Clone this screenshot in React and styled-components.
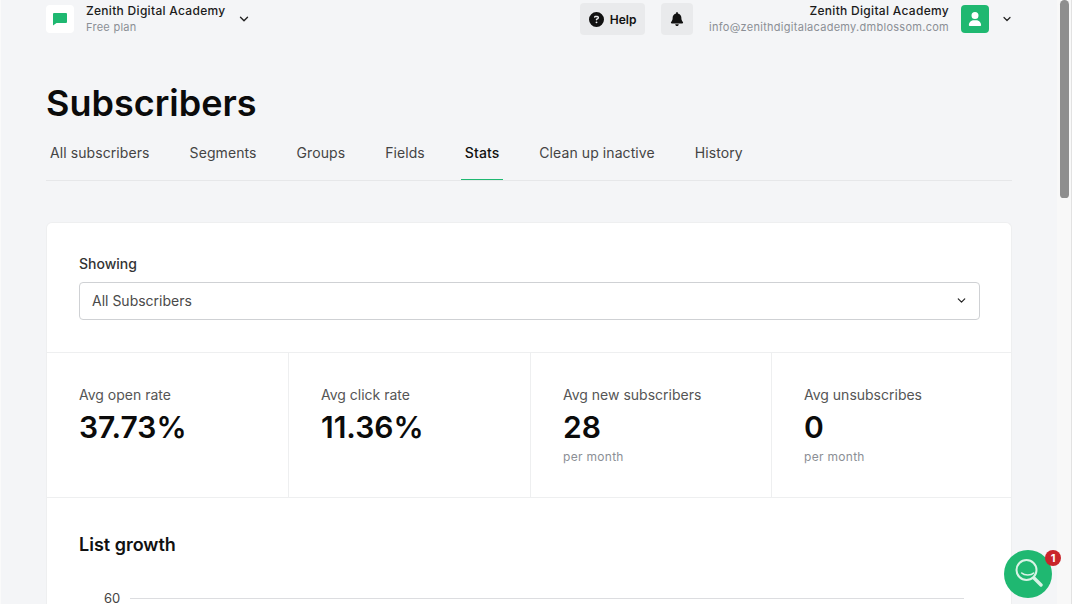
import React from 'react'
import styled, { createGlobalStyle } from 'styled-components'
import { ChevronDown } from 'lucide-react'
import { FaBell, FaCircleQuestion, FaUser } from 'react-icons/fa6'

const Global = createGlobalStyle`
  html, body { margin: 0; height: 100%; overflow: hidden; }
  body { font-family: Inter, "Liberation Sans", sans-serif; background: #f4f5f7; color: #111; }
`

const Shell = styled.div`
  display: flex;
  width: 1073px;
  height: 604px;
  overflow: hidden;
  position: relative;
`
const Page = styled.div`
  flex: 1;
  min-width: 0;
  padding: 0 45px 0 46px;
  box-shadow: inset 1px 0 0 #fafafa;
  box-sizing: border-box;
`
const Scrollbar = styled.div`
  width: 16px;
  background: #f8f8f8;
  box-sizing: border-box;
  padding-left: 3px;
  box-shadow: inset -1px 0 0 #fff, inset -2px 0 0 #e2e2e2;
`
const Thumb = styled.div`
  width: 9px;
  height: 198px;
  border-radius: 5px 5px 4px 4px;
  background: #8e8e8e;
`
const TopBar = styled.header`
  display: flex;
  justify-content: space-between;
  align-items: center;
  height: 38px;
  margin-right: -1px;
`
const Group = styled.div`
  display: flex;
  align-items: center;
`
const LogoBox = styled.div`
  width: 28px;
  height: 28px;
  border-radius: 4px;
  background: #fff;
  display: flex;
  align-items: center;
  justify-content: center;
`
const Org = styled.div`
  margin-left: 12px;
`
const Name = styled.div`
  font-size: 12px;
  line-height: 16px;
  font-weight: 500;
  letter-spacing: 0.3px;
  color: #1b1b1b;
  text-align: ${p => (p.$right ? 'right' : 'left')};
`
const Sub = styled.div`
  font-size: 11px;
  line-height: 16px;
  letter-spacing: 0.275px;
  color: #8b8f95;
  text-align: ${p => (p.$right ? 'right' : 'left')};
`
const Chevron = styled(ChevronDown)`
  color: #222;
  margin-left: ${p => p.$gap}px;
`
const ToolButton = styled.button`
  height: 32px;
  width: ${p => p.$w}px;
  margin-right: ${p => p.$mr}px;
  border: 0;
  border-radius: 4px;
  background: #e9eaec;
  color: #111;
  display: flex;
  align-items: center;
  justify-content: center;
  gap: 6px;
  padding: 0;
  font: 600 12px Inter, sans-serif;
`
const Avatar = styled.div`
  width: 28px;
  height: 28px;
  margin-left: 12px;
  border-radius: 4px;
  background: #1fb871;
  color: #fff;
  display: flex;
  align-items: center;
  justify-content: center;
`
const Title = styled.h1`
  margin: 43px 0 0;
  font-size: 36px;
  line-height: 44px;
  font-weight: 600;
  color: #0b0b0b;
`
const Tabs = styled.nav`
  display: flex;
  gap: 32px;
  margin-top: 11px;
  height: 44px;
  border-bottom: 1px solid #e6e7e9;
`
const Tab = styled.a`
  padding: 0 4px;
  height: 44px;
  box-sizing: border-box;
  line-height: 34px;
  font-size: 14px;
  letter-spacing: 0.085px;
  font-weight: ${p => (p.$active ? 500 : 400)};
  color: ${p => (p.$active ? '#111' : '#444')};
  border-bottom: 1px solid ${p => (p.$active ? '#1fb871' : 'transparent')};
`
const Card = styled.section`
  margin-top: 41px;
  background: #fff;
  border-radius: 6px 6px 0 0;
  border: 1px solid #eeeff0;
  border-bottom: 0;
  height: 400px;
`
const Filter = styled.div`
  padding: 31px 31px 32px 32px;
`
const FieldLabel = styled.div`
  font-size: 14px;
  line-height: 20px;
  font-weight: 500;
  color: #333;
  margin-bottom: 8px;
`
const Select = styled.div`
  height: 38px;
  box-sizing: border-box;
  border: 1px solid #cfd1d4;
  border-radius: 4px;
  padding: 0 11px 2px 12px;
  display: flex;
  align-items: center;
  justify-content: space-between;
  font-size: 14px;
  color: #4a4a4a;
`
const Stats = styled.div`
  display: grid;
  grid-template-columns: 241px 242px 241px 1fr;
  height: 144px;
  border-top: 1px solid #eeeff0;
  border-bottom: 1px solid #eeeff0;
`
const Stat = styled.div`
  padding: 32px 32px 0;
  border-left: ${p => (p.$first ? '0' : '1px solid #eeeff0')};
`
const StatLabel = styled.div`
  font-size: 14px;
  line-height: 20px;
  color: #555;
`
const StatValue = styled.div`
  margin-top: 2px;
  font-size: 30px;
  line-height: 40px;
  font-weight: 600;
  color: #0b0b0b;
`
const StatNote = styled.div`
  font-size: 12px;
  line-height: 18px;
  margin-top: 1px;
  letter-spacing: 0.3px;
  color: #8b8f95;
`
const Growth = styled.div`
  padding: 35px 32px 0;
`
const GrowthTitle = styled.h2`
  margin: 0;
  font-size: 18px;
  line-height: 24px;
  font-weight: 600;
  color: #111;
`
const AxisRow = styled.div`
  display: flex;
  align-items: center;
  gap: 10px;
  margin-top: 33px;
  padding-left: 25px;
  font-size: 13px;
  line-height: 16px;
  color: #444;
`
const GridLine = styled.div`
  flex: 1;
  height: 1px;
  margin-right: 15px;
  background: #dcdde0;
`
const ChatButton = styled.div`
  position: absolute;
  left: 1004px;
  top: 550px;
  width: 48px;
  height: 48px;
  border-radius: 50%;
  background: #1fb871;
  display: flex;
  align-items: center;
  justify-content: center;
`
const Badge = styled.div`
  position: absolute;
  top: 0;
  right: -9px;
  width: 16px;
  height: 16px;
  border-radius: 50%;
  background: #c9252b;
  color: #fff;
  font-size: 11px;
  font-weight: 700;
  line-height: 16px;
  text-align: center;
`

const tabs = ['All subscribers', 'Segments', 'Groups', 'Fields', 'Stats', 'Clean up inactive', 'History']
const stats = [
  { label: 'Avg open rate', value: '37.73%' },
  { label: 'Avg click rate', value: '11.36%' },
  { label: 'Avg new subscribers', value: '28', note: 'per month' },
  { label: 'Avg unsubscribes', value: '0', note: 'per month' },
]

const App = () => {
  return (
    <Shell>
      <Global />
      <Page>
        <TopBar>
          <Group>
            <LogoBox>
              <svg width="16" height="14" viewBox="0 0 16 14" fill="#1fb871">
                <path d="M2 1h12a1 1 0 0 1 1 1v8a1 1 0 0 1-1 1H4.5L1 13.5V2a1 1 0 0 1 1-1z" />
              </svg>
            </LogoBox>
            <Org>
              <Name>Zenith Digital Academy</Name>
              <Sub>Free plan</Sub>
            </Org>
            <Chevron size={14} strokeWidth={2.4} $gap={11} />
          </Group>
          <Group>
            <ToolButton $w={65} $mr={16}><FaCircleQuestion size={15} />Help</ToolButton>
            <ToolButton $w={32} $mr={16}><FaBell size={14} /></ToolButton>
            <div>
              <Name $right>Zenith Digital Academy</Name>
              <Sub $right>info@zenithdigitalacademy.dmblossom.com</Sub>
            </div>
            <Avatar><FaUser size={14} /></Avatar>
            <Chevron size={12} strokeWidth={2.4} $gap={12} />
          </Group>
        </TopBar>
        <Title>Subscribers</Title>
        <Tabs>
          {tabs.map(t => <Tab key={t} $active={t === 'Stats'}>{t}</Tab>)}
        </Tabs>
        <Card>
          <Filter>
            <FieldLabel>Showing</FieldLabel>
            <Select>
              All Subscribers
              <ChevronDown size={13} strokeWidth={2.2} color="#222" />
            </Select>
          </Filter>
          <Stats>
            {stats.map((s, i) => (
              <Stat key={s.label} $first={i === 0}>
                <StatLabel>{s.label}</StatLabel>
                <StatValue>{s.value}</StatValue>
                {s.note && <StatNote>{s.note}</StatNote>}
              </Stat>
            ))}
          </Stats>
          <Growth>
            <GrowthTitle>List growth</GrowthTitle>
            <AxisRow>60<GridLine /></AxisRow>
          </Growth>
        </Card>
      </Page>
      <Scrollbar><Thumb /></Scrollbar>
      <ChatButton>
        <svg width="30" height="30" viewBox="0 0 30 30" fill="none" stroke="#d8f3e5" strokeLinecap="round">
          <circle cx="13.5" cy="11" r="10" strokeWidth="2" />
          <path d="M8.7 14c2.6 2.6 9.6 2.6 12 0" strokeWidth="1.6" />
          <path d="M21 19l7 7" strokeWidth="3.4" />
        </svg>
        <Badge>1</Badge>
      </ChatButton>
    </Shell>
  )
}

export default App
